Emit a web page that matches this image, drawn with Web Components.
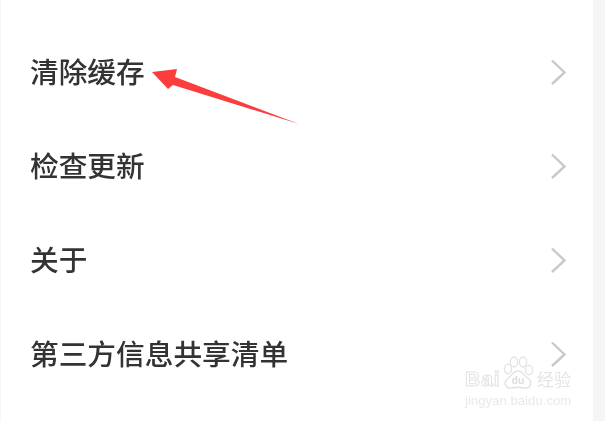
<!DOCTYPE html>
<html lang="zh">
<head>
<meta charset="UTF-8">
<title>设置</title>
<style>
  html, body { margin: 0; height: 100%; background: #fff; }
  body { overflow: hidden; font-family: "Liberation Sans", "Noto Sans CJK SC", sans-serif; }
</style>
</head>
<body>
<settings-page>
  <settings-row>清除缓存</settings-row>
  <settings-row>检查更新</settings-row>
  <settings-row>关于</settings-row>
  <settings-row>第三方信息共享清单</settings-row>
</settings-page>
<script>
class SettingsRow extends HTMLElement {
  constructor() {
    super();
    this.attachShadow({mode: 'open'});
    this.shadowRoot.innerHTML = `
      <style>
        :host {
          display: flex;
          align-items: center;
          justify-content: space-between;
          height: 94px;
          padding: 0 26px 0 29px;
          font: 500 28.7px/1 "Noto Sans CJK SC", sans-serif;
          color: #333;
        }
        .label { display: block; margin-top: -2px; filter: blur(.35px); }
        svg { display: block; width: 17px; height: 27px; filter: blur(.3px); }
      </style>
      <span class="label"><slot></slot></span>
      <svg viewBox="0 0 17 27" fill="none" stroke="#c9c9c9" stroke-width="2.4">
        <path d="M2 1.5 L14.5 13.5 L2 25"/>
      </svg>`;
  }
}

class SettingsPage extends HTMLElement {
  constructor() {
    super();
    this.attachShadow({mode: 'open'});
    this.shadowRoot.innerHTML = `
      <style>
        :host {
          display: block;
          position: relative;
          width: 605px;
          height: 421px;
          box-sizing: border-box;
          padding: 0 12px 0 1px;
          background: linear-gradient(#f7f7f7, #f7f7f7) left / 1px 100% no-repeat, #f5f5f5;
          overflow: hidden;
        }
        .list { background: #fff; height: 100%; box-sizing: border-box; padding-top: 25px; }
        .arrow { position: absolute; left: 0; top: 0; width: 605px; height: 421px; }
      </style>
      <div class="list"><slot></slot></div>
      <svg class="arrow" viewBox="0 0 605 421">
        <path fill="#fb3d3d" d="M152 72 L177 69 L175 77 L299 124 L173 85 L168 89 Z"/>
      </svg>
      <baidu-mark></baidu-mark>`;
  }
}

class BaiduMark extends HTMLElement {
  constructor() {
    super();
    this.attachShadow({mode: 'open'});
    this.shadowRoot.innerHTML = `
      <style>
        :host {
          position: absolute;
          left: 465px;
          top: 356px;
          width: 108px;
          height: 52px;
          color: #e9e9e9;
          filter: blur(.4px);
        }
        .logo { display: flex; align-items: center; height: 34px; margin-top: 5px; }
        .bai {
          width: 37px;
          font: 700 21px/1 "Liberation Sans", sans-serif;
          letter-spacing: 1px;
          color: #fff;
          -webkit-text-stroke: 1px #e2e2e2;
        }
        .jy { font: 400 17px/1 "Noto Sans CJK SC", sans-serif; margin-left: 35px; color: #e4e4e4; }
        .url { font: 400 13.2px/1 "Liberation Sans", sans-serif; margin-top: -1px; white-space: nowrap; }
        svg { position: absolute; left: 37px; top: 0; width: 32px; height: 34px; }
        text { font: 700 10.5px "Liberation Sans", sans-serif; fill: #dedede; }
      </style>
      <svg viewBox="0 0 32 34" fill="#fff" stroke="#e2e2e2" stroke-width="1.3">
        <ellipse cx="6" cy="13" rx="3.6" ry="4.8"/>
        <ellipse cx="12" cy="6" rx="3.6" ry="5"/>
        <ellipse cx="21" cy="6" rx="3.6" ry="5"/>
        <ellipse cx="27" cy="14" rx="3.6" ry="4.8"/>
        <path d="M16 15 C11 15 10 20 5 23 C1 27 4 33 10 32 C14 31 18 31 22 32 C28 33 31 27 27 23 C22 20 21 15 16 15 Z"/>
        <text x="9.5" y="28" stroke="none">du</text>
      </svg>
      <div class="logo"><span class="bai">Bai</span><span class="jy">经验</span></div>
      <div class="url">jingyan.baidu.com</div>`;
  }
}

customElements.define('baidu-mark', BaiduMark);
customElements.define('settings-row', SettingsRow);
customElements.define('settings-page', SettingsPage);
</script>
</body>
</html>
